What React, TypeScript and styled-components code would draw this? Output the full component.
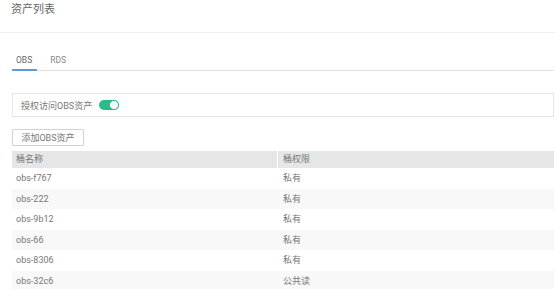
import React from 'react';
import styled, { createGlobalStyle } from 'styled-components';

const GlobalStyle = createGlobalStyle`
  html, body {
    margin: 0;
    padding: 0;
    background: #fff;
    overflow: hidden;
  }
  body {
    font-family: Roboto, "Noto Sans CJK SC", sans-serif;
    color: #777;
  }
`;

const buckets = [
  { name: 'obs-f767', acl: '私有' },
  { name: 'obs-222', acl: '私有' },
  { name: 'obs-9b12', acl: '私有' },
  { name: 'obs-66', acl: '私有' },
  { name: 'obs-8306', acl: '私有' },
  { name: 'obs-32c6', acl: '公共读' },
];

export default function App() {
  const [enabled, setEnabled] = React.useState(true);
  const [tab, setTab] = React.useState('OBS');

  return (
    <Page>
      <GlobalStyle />
      <PageHeader>
        <Title>资产列表</Title>
      </PageHeader>
      <Content>
        <Tabs>
          {['OBS', 'RDS'].map((t) => (
            <Tab key={t} $active={tab === t} onClick={() => setTab(t)}>
              {t}
            </Tab>
          ))}
        </Tabs>
        <AuthBox>
          <span>授权访问OBS资产</span>
          <Switch $on={enabled} onClick={() => setEnabled(!enabled)} />
        </AuthBox>
        <AddButton>添加OBS资产</AddButton>
        <Table>
          <HeadRow>
            <HeadCell>桶名称</HeadCell>
            <HeadCell>桶权限</HeadCell>
          </HeadRow>
          {buckets.map((b, i) => (
            <Row key={b.name} $striped={i % 2 === 1}>
              <Cell>{b.name}</Cell>
              <Cell>{b.acl}</Cell>
            </Row>
          ))}
        </Table>
      </Content>
    </Page>
  );
}

const Page = styled.div`
  width: 555px;
  height: 289px;
  overflow: hidden;
`;

const PageHeader = styled.div`
  height: 33px;
  padding-left: 11px;
  border-bottom: 1px solid #eeeeee;
  box-sizing: border-box;
`;

const Title = styled.div`
  font-size: 11px;
  line-height: 20px;
  color: #666;
`;

const Content = styled.div`
  padding: 0 1px 0 12px;
`;

const Tabs = styled.div`
  display: flex;
  margin-top: 19px;
  border-bottom: 1px solid #e2e2e2;
  height: 19px;
  box-sizing: border-box;
`;

const Tab = styled.div<{ $active: boolean }>`
  padding: 0 5px 0 4px;
  margin-right: 9px;
  font-size: 8.5px;
  line-height: 17px;
  color: ${(p) => (p.$active ? '#666' : '#888')};
  border-bottom: 2px solid ${(p) => (p.$active ? '#5a9bd8' : 'transparent')};
  margin-bottom: -1px;
  cursor: pointer;
`;

const AuthBox = styled.div`
  display: flex;
  align-items: center;
  gap: 7px;
  margin-top: 22px;
  height: 24px;
  padding-left: 8px;
  border: 1px solid #e6e6e6;
  box-sizing: border-box;
  font-size: 9px;
  color: #777;
`;

const Switch = styled.div<{ $on: boolean }>`
  position: relative;
  width: 20px;
  height: 10px;
  border-radius: 5px;
  background: ${(p) => (p.$on ? '#2dbb8b' : '#ccc')};
  cursor: pointer;

  &::after {
    content: '';
    position: absolute;
    top: 0;
    ${(p) => (p.$on ? 'right: 0;' : 'left: 0;')}
    width: 10px;
    height: 10px;
    box-sizing: border-box;
    border-radius: 50%;
    background: #fff;
    border: 1px solid ${(p) => (p.$on ? '#2dbb8b' : '#ccc')};
  }
`;

const AddButton = styled.button`
  display: block;
  margin-top: 12px;
  width: 72px;
  height: 17px;
  padding: 0;
  border: 1px solid #d2d2d2;
  border-radius: 1px;
  background: #fff;
  font-family: inherit;
  font-size: 9px;
  color: #777;
`;

const Table = styled.div`
  margin-top: 5px;
`;

const HeadRow = styled.div`
  display: grid;
  grid-template-columns: 265px 1fr;
  height: 17px;
  background: #e4e6e7;
`;

const HeadCell = styled.div`
  font-size: 9px;
  line-height: 17px;
  padding-left: 4px;
  color: #777;

  & + & {
    border-left: 1px solid #fff;
    padding-left: 5px;
  }
`;

const Row = styled.div<{ $striped: boolean }>`
  display: grid;
  grid-template-columns: 265px 1fr;
  height: 20.6px;
  background: ${(p) => (p.$striped ? '#f8f8f8' : '#fff')};
`;

const Cell = styled.div`
  font-size: 9px;
  line-height: 20.6px;
  padding-left: 4px;
  color: #777;

  & + & {
    padding-left: 6px;
  }
`;
